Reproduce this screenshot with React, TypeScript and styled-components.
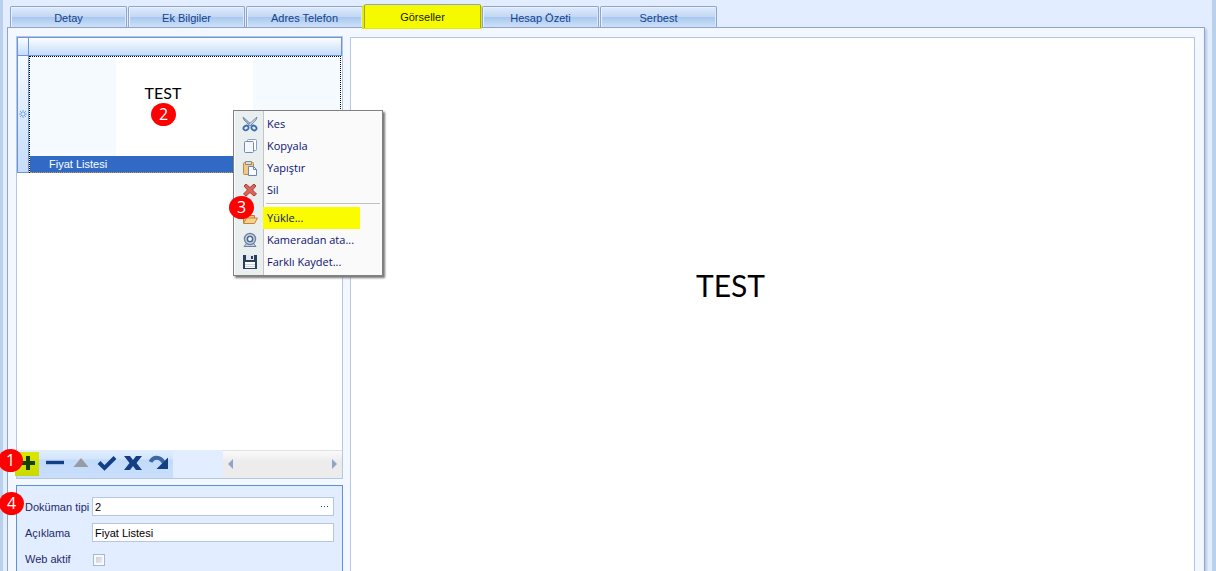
import React from "react";
import styled, { createGlobalStyle, css } from "styled-components";

const ui = '"Liberation Sans", Arial, sans-serif';
const humanist = '"Open Sans", "Noto Sans", sans-serif';

const GlobalStyle = createGlobalStyle`
  *, *::before, *::after { box-sizing: border-box; }
  body { margin: 0; font-family: ${ui}; font-size: 11px; color: #1f2a6b; }
  button, input { font: inherit; color: inherit; margin: 0; }
  button { border: 0; background: none; padding: 0; cursor: pointer; }
`;

const Frame = styled.main`
  min-height: 100vh;
  display: flex;
  flex-direction: column;
  background: #e2eeff;
  border-left: 3px solid #b9d1ea;
  border-right: 4px solid #b9d1ea;
  padding: 4px 7px 0 4px;
`;

const TabBar = styled.div`
  display: flex;
  align-items: flex-end;
  gap: 1px;
  height: 23px;
  padding-left: 3px;
`;

const Tab = styled.button<{ $active?: boolean }>`
  width: 117px;
  height: 21px;
  padding-top: 2px;
  color: #15428b;
  border: 1px solid #8fa4c8;
  border-bottom: 0;
  border-radius: 2px 2px 0 0;
  box-shadow: inset 1px 1px 0 #e9f2fd, inset -1px 0 0 #dbe8fa;
  background: linear-gradient(#dfebfb, #c3d8f4 48%, #a9c8ef 52%, #cfe1f9);
  ${(p) =>
    p.$active &&
    css`
      position: relative;
      height: 24px;
      margin-bottom: -1px;
      padding-bottom: 1px;
      color: #1a1a00;
      border-color: #a3a716;
      border-top-color: #8fa4c8;
      background: #f6fa00;
      box-shadow: -2px 1px 0 #e4ea00, 1px 1px 0 #e4ea00;
    `}
`;

const Page = styled.section`
  flex: 1;
  display: flex;
  gap: 7px;
  padding: 8px 9px 0 8px;
  background: #f3f7ff;
  border: 1px solid #8fa4c8;
  border-bottom: 0;
  box-shadow: 2px 2px 2px #b9cae6;
`;

const SideColumn = styled.div`
  flex: 0 0 327px;
  display: flex;
  flex-direction: column;
  gap: 6px;
`;

const Gallery = styled.div`
  flex: 1;
  display: flex;
  flex-direction: column;
  background: #fff;
  border: 1px solid #b4c6e2;
`;

const GridHeader = styled.div`
  display: flex;
  height: 19px;
  border: 1px solid #6a96d5;
  background: linear-gradient(#fbfdff, #c5dcfb);
  &::before {
    content: "";
    width: 11px;
    border-right: 1px solid #6a96d5;
  }
`;

const Record = styled.div`
  position: relative;
  display: flex;
  height: 117px;
`;

const RowIndicator = styled.div`
  width: 12px;
  display: flex;
  align-items: center;
  justify-content: center;
  border: 1px solid #6a96d5;
  border-top: 0;
  background: linear-gradient(#f4f9ff, #c5dcfb);
`;

const Card = styled.div`
  flex: 1;
  display: flex;
  flex-direction: column;
  margin-right: 1px;
  border: 1px dotted #000;
  border-bottom: 0;
  background: #f5faff;
`;

const Thumb = styled.div`
  flex: 1;
  width: 137px;
  margin-left: 86px;
  padding: 26px 43px 0 0;
  background: #fff;
  color: #000;
  font: 16px/20px Lato, sans-serif;
  text-align: center;
`;

const Caption = styled.div`
  height: 17px;
  padding-left: 19px;
  line-height: 17px;
  color: #fff;
  background: #316ac5;
  border-bottom: 1px dotted #d59a3a;
`;

const Badge = styled.span<{ $x: number; $y: number }>`
  position: absolute;
  left: ${(p) => p.$x}px;
  top: ${(p) => p.$y}px;
  z-index: 3;
  width: 25px;
  height: 23px;
  border-radius: 50%;
  background: #fe0000;
  color: #fff;
  font: 16px/22px ${humanist};
  text-align: center;
`;

const Menu = styled.div`
  position: absolute;
  left: 216px;
  top: 54px;
  z-index: 2;
  width: 150px;
  padding: 2px 2px 2px 1px;
  border: 1px solid #808080;
  background: linear-gradient(90deg, #fcfcfc 1px, #e9eeee 1px, #e9eeee 29px, #c5c5c5 29px, #c5c5c5 30px, #fafafa 30px);
  box-shadow: 2px 2px 2px #777;
`;

const MenuItem = styled.button<{ $marked?: boolean }>`
  position: relative;
  display: flex;
  align-items: center;
  width: 125px;
  height: 22px;
  color: #0a1270;
  font: 11px/22px ${humanist};
  text-align: left;
  white-space: nowrap;
  svg { flex: none; margin: 0 5px 0 7px; }
  > span:first-of-type {
    padding-left: 4px;
    ${(p) => p.$marked && css`flex: 1; background: #fcfc00;`}
  }
`;

const Separator = styled.hr`
  height: 1px;
  margin: 2px 0 3px 31px;
  border: 0;
  background: #c0c0c0;
`;

const Footer = styled.div`
  position: relative;
  display: flex;
  height: 28px;
  margin-top: auto;
  background: #e2eeff;
`;

const NavBar = styled.div`
  display: flex;
  width: 156px;
  background: linear-gradient(#e0edfe, #d4e6fd 30%, #c3dbfb 36%, #c8defb);
`;

const NavButton = styled.button<{ $marked?: boolean }>`
  width: 26px;
  height: 26px;
  display: flex;
  align-items: center;
  justify-content: center;
  ${(p) =>
    p.$marked &&
    css`
      width: 24px;
      height: 24px;
      margin: 2px 3px 0 -2px;
      padding: 0 0 2px 2px;
      background: linear-gradient(#dce700, #c9d900);
    `}
`;

const ScrollBar = styled.div`
  display: flex;
  align-items: center;
  justify-content: space-between;
  width: 119px;
  margin-left: auto;
  padding: 0 5px 2px;
  border-top: 1px solid #e0e0e0;
  background: linear-gradient(#fafafa, #ececec 40%);
`;

const Details = styled.form`
  position: relative;
  height: 86px;
  padding: 11px 8px 0 8px;
  border: 1px solid #5f90d4;
  border-bottom: 0;
  background: #e2eeff;
`;

const Field = styled.div`
  display: flex;
  align-items: center;
  height: 19px;
  margin-bottom: 7px;
`;

const Label = styled.label`
  flex: 0 0 67px;
  line-height: 18px;
  white-space: nowrap;
`;

const EditBox = styled.div`
  flex: 1;
  display: flex;
  align-items: center;
  height: 19px;
  background: #fff;
  border: 1px solid #b4c6e2;
`;

const TextInput = styled.input`
  flex: 1;
  min-width: 0;
  height: 16px;
  padding: 0 2px;
  border: 0;
  outline: 0;
  background: none;
  color: #000;
`;

const MoreButton = styled.button`
  display: flex;
  width: 17px;
  justify-content: center;
`;

const CheckBox = styled.input`
  appearance: none;
  width: 12px;
  height: 12px;
  margin: 2px 0 0 1px;
  border: 1px solid #a9b8d2;
  background: linear-gradient(135deg, #c2c7ce, #f4f4f4);
  box-shadow: inset 0 0 0 2px #f6f9fd;
`;

const Preview = styled.div`
  flex: 1;
  display: flex;
  justify-content: center;
  margin-top: 1px;
  padding: 227px 84px 0 0;
  background: #fff;
  border: 1px solid #b4c6e2;
  border-bottom: 0;
  color: #000;
  font: 30px/40px Lato, sans-serif;
`;

const Icon = ({ children }: { children: React.ReactNode }) => (
  <svg width="16" height="16" viewBox="0 0 16 16" fill="none" aria-hidden="true">
    {children}
  </svg>
);

const icons = {
  cut: (
    <Icon>
      <path d="M1 1l1 3 6 6 2-1z" fill="#9db4c8" stroke="#66829f" strokeWidth=".8" />
      <path d="M15 1l-1 3-6 6-2-1z" fill="#c6d6e3" stroke="#66829f" strokeWidth=".8" />
      <ellipse cx="4" cy="12" rx="2.600" ry="2.200" stroke="#3a6db5" strokeWidth="1.800" transform="rotate(-35 4 12)" />
      <ellipse cx="12" cy="12" rx="2.600" ry="2.200" stroke="#3a6db5" strokeWidth="1.800" transform="rotate(35 12 12)" />
    </Icon>
  ),
  copy: (
    <Icon>
      <rect x="5.500" y="1.500" width="9" height="11" rx="1" fill="#fff" stroke="#8a9cc8" />
      <rect x="2.500" y="3.500" width="9" height="11" rx="1" fill="#f3f7ff" stroke="#7488bd" />
    </Icon>
  ),
  paste: (
    <Icon>
      <rect x="1.500" y="2.500" width="10" height="12" rx="1" fill="#f0c983" stroke="#b98a45" />
      <path d="M3.500 1.500h6v3h-6z" fill="#d8dce2" stroke="#8d8a80" />
      <path d="M6.500 6.500h5l3 3v6h-8z" fill="#f7faff" stroke="#6d83b0" />
      <path d="M11.500 6.500v3h3" stroke="#6d83b0" />
    </Icon>
  ),
  del: (
    <Icon>
      <path d="M2 4l2-2 4 3.500L12 2l2 2-3.500 4 4 4-2.500 2-4-3.500L4 14l-2.500-2 4-4z" fill="#dd6558" stroke="#a83c35" />
    </Icon>
  ),
  load: (
    <Icon>
      <path d="M1.500 13V3.500h5l1 2h5V8" fill="#f2c27c" stroke="#c07a2b" />
      <path d="M1.500 13.500L4.500 8h11l-3 5.500z" fill="#fbd193" stroke="#c6842f" />
    </Icon>
  ),
  camera: (
    <Icon>
      <path d="M2 14.500h12l-2.500-3h-7z" fill="#c9d3e0" stroke="#6a7f9f" />
      <circle cx="8" cy="7" r="5.500" fill="#d9e2ef" stroke="#6a7f9f" strokeWidth="1.400" />
      <circle cx="8" cy="7" r="2.700" fill="#f4f8ff" stroke="#4f6690" strokeWidth="1.600" />
    </Icon>
  ),
  save: (
    <Icon>
      <path d="M1 1h14v14H1z" fill="#2c3d5a" />
      <path d="M4 1h8v5H4z" fill="#dfe6ef" />
      <path d="M9 2h2v3H9z" fill="#2c3d5a" />
      <path d="M3 8h10v6H3z" fill="#f8fafc" />
      <path d="M3 10.500h10M3 12.500h10" stroke="#c9d2de" />
    </Icon>
  ),
};

const navIcons = [
  { label: "Ekle", marked: true, art: <path d="M10 3v14M3 10h14" stroke="#174006" strokeWidth="4" /> },
  { label: "Çıkar", art: <path d="M1 9.500h18" stroke="#153f85" strokeWidth="3.400" /> },
  { label: "Yukarı", art: <path d="M2.500 14L10 5l7.500 9z" fill="#979ba3" /> },
  { label: "Onayla", art: <path d="M2 9.500l5.500 5.500L18 4.500" stroke="#153f85" strokeWidth="4" /> },
  {
    label: "İptal",
    art: <path d="M1 3h6l3 4 3-4h6l-5.500 7 5.500 7h-6l-3-4-3 4H1l5.500-7z" fill="#153f85" />,
  },
  {
    label: "Yenile",
    art: (
      <>
        <path d="M1.500 9C4 3.500 11 3 15 10" stroke="#3e689f" strokeWidth="4" />
        <path d="M19 4.500V16H7.500z" fill="#153f85" />
      </>
    ),
  },
];

const Arrow = ({ d }: { d: string }) => (
  <svg width="5" height="10" viewBox="0 0 5 10" aria-hidden="true">
    <path d={d} fill="#93a2c9" />
  </svg>
);

const tabs = ["Detay", "Ek Bilgiler", "Adres Telefon", "Görseller", "Hesap Özeti", "Serbest"];

export default function App() {
  return (
    <>
      <GlobalStyle />
      <Frame>
        <TabBar role="tablist">
          {tabs.map((t) => (
            <Tab key={t} role="tab" aria-selected={t === "Görseller"} $active={t === "Görseller"}>
              {t}
            </Tab>
          ))}
        </TabBar>
        <Page>
          <SideColumn>
            <Gallery>
              <GridHeader />
              <Record>
                <RowIndicator>
                  <svg width="8" height="8" viewBox="0 0 8 8" aria-hidden="true">
                    <path d="M4 0v3M4 5v3M0 4h3M5 4h3M1 1l2 2M5 5l2 2M7 1L5 3M3 5L1 7" stroke="#6ea3e6" />
                  </svg>
                </RowIndicator>
                <Card>
                  <Thumb>TEST</Thumb>
                  <Caption>Fiyat Listesi</Caption>
                </Card>
                <Badge $x={134} $y={47}>2</Badge>
                <Menu role="menu">
                  <MenuItem role="menuitem">{icons.cut}<span>Kes</span></MenuItem>
                  <MenuItem role="menuitem">{icons.copy}<span>Kopyala</span></MenuItem>
                  <MenuItem role="menuitem">{icons.paste}<span>Yapıştır</span></MenuItem>
                  <MenuItem role="menuitem">{icons.del}<span>Sil</span></MenuItem>
                  <Separator />
                  <MenuItem role="menuitem" $marked>
                    {icons.load}
                    <span>Yükle...</span>
                    <Badge $x={-6} $y={-11}>3</Badge>
                  </MenuItem>
                  <MenuItem role="menuitem">{icons.camera}<span>Kameradan ata...</span></MenuItem>
                  <MenuItem role="menuitem">{icons.save}<span>Farklı Kaydet...</span></MenuItem>
                </Menu>
              </Record>
              <Footer>
                <NavBar>
                  {navIcons.map((n) => (
                    <NavButton key={n.label} aria-label={n.label} $marked={n.marked}>
                      <svg width="20" height="20" viewBox="0 0 20 20" fill="none" aria-hidden="true">
                        {n.art}
                      </svg>
                    </NavButton>
                  ))}
                </NavBar>
                <ScrollBar>
                  <Arrow d="M5 0v10L0 5z" />
                  <Arrow d="M0 0v10l5-5z" />
                </ScrollBar>
                <Badge $x={-19} $y={-1}>1</Badge>
              </Footer>
            </Gallery>
            <Details>
              <Badge $x={-18} $y={6}>4</Badge>
              <Field>
                <Label htmlFor="doc-type">Doküman tipi</Label>
                <EditBox>
                  <TextInput id="doc-type" defaultValue="2" />
                  <MoreButton type="button" aria-label="Seç">
                    <svg width="8" height="2" viewBox="0 0 8 2" aria-hidden="true">
                      <path d="M0 0h1v1H0zM3 0h1v1H3zM6 0h1v1H6z" fill="#15428b" />
                    </svg>
                  </MoreButton>
                </EditBox>
              </Field>
              <Field>
                <Label htmlFor="description">Açıklama</Label>
                <EditBox>
                  <TextInput id="description" defaultValue="Fiyat Listesi" />
                </EditBox>
              </Field>
              <Field>
                <Label htmlFor="web-active">Web aktif</Label>
                <CheckBox id="web-active" type="checkbox" />
              </Field>
            </Details>
          </SideColumn>
          <Preview>TEST</Preview>
        </Page>
      </Frame>
    </>
  );
}
